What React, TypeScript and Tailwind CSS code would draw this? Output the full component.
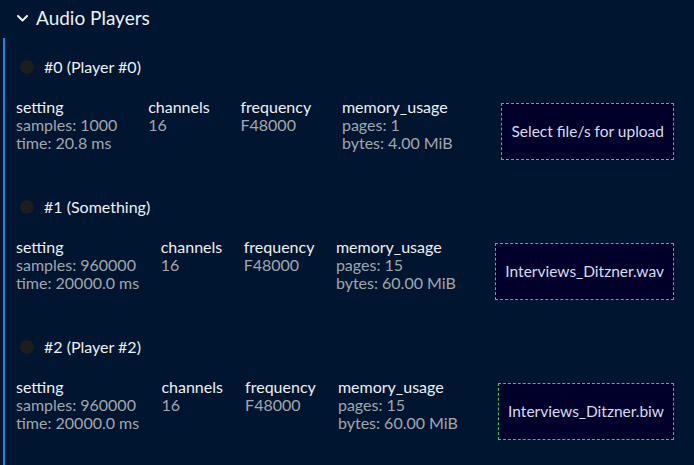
import React from 'react';

interface Player {
  id: number;
  name: string;
  samples: number;
  time: string;
  pages: number;
  bytes: string;
  file?: string;
}

const players: Player[] = [
  { id: 0, name: 'Player #0', samples: 1000, time: '20.8', pages: 1, bytes: '4.00' },
  { id: 1, name: 'Something', samples: 960000, time: '20000.0', pages: 15, bytes: '60.00', file: 'Interviews_Ditzner.wav' },
  { id: 2, name: 'Player #2', samples: 960000, time: '20000.0', pages: 15, bytes: '60.00', file: 'Interviews_Ditzner.biw' },
];

function Stat({ label, lines }: { label: string; lines: string[] }) {
  return (
    <div className="flex flex-col leading-[18px]">
      <span className="text-[#eef0f4]">{label}</span>
      {lines.map((l) => (
        <span key={l} className="text-[#a3a6ad]">
          {l}
        </span>
      ))}
    </div>
  );
}

const boxEmpty =
  'ml-[18px] mt-[5px] h-[57px] px-[9px] flex items-center bg-[#00002a] border border-dashed border-[#8e9299] text-[15.5px] text-[#d9ddf0]';
const boxLoaded =
  'ml-[18px] mt-[5px] h-[57px] px-[9px] flex items-center bg-[#00002a] border border-dashed border-[#22d06c] text-[15.5px] text-[#d9ddf0]';

function PlayerCard({ player }: { player: Player }) {
  return (
    <div className="flex flex-col pb-[38px]">
      {/* Player header */}
      <div className="flex items-center h-[18px] pl-[20px]">
        <div className="w-[14px] h-[14px] rounded-full bg-[#1d1d1e]" />
        <span className="ml-[10px] text-[#eef0f4]">
          #{player.id} ({player.name})
        </span>
      </div>

      {/* Stats */}
      <div className="flex items-start justify-between mt-[22px] pl-[16px] pr-[20px]">
        <Stat label="setting" lines={[`samples: ${player.samples}`, `time: ${player.time} ms`]} />
        <Stat label="channels" lines={['16']} />
        <Stat label="frequency" lines={['F48000']} />
        <Stat label="memory_usage" lines={[`pages: ${player.pages}`, `bytes: ${player.bytes} MiB`]} />
        <div className={player.file ? boxLoaded : boxEmpty}>{player.file ?? 'Select file/s for upload'}</div>
      </div>
    </div>
  );
}

export default function App() {
  return (
    <div
      className="w-[694px] h-[465px] overflow-hidden bg-[#001530] text-[16px]"
      style={{ fontFamily: 'Lato, "Open Sans", sans-serif' }}
    >
      {/* Section header */}
      <div className="flex items-center h-[38px] pl-[17px] pb-[2px]">
        <svg width="11" height="7" viewBox="0 0 11 7" fill="none" className="mt-[1px]">
          <path d="M1 1l4.5 4.5L10 1" stroke="#eef0f4" strokeWidth="2" strokeLinecap="round" strokeLinejoin="round" />
        </svg>
        <span className="ml-[8px] text-[19px] leading-[24px] text-[#eef0f4]">Audio Players</span>
      </div>

      {/* Players list */}
      <div className="flex ml-[3px]">
        <div className="w-[2px] bg-[#0a8ee8] shrink-0" />
        <div className="flex-1 flex flex-col pt-[20px] -ml-[5px]">
          {players.map((p) => (
            <PlayerCard key={p.id} player={p} />
          ))}
        </div>
      </div>
    </div>
  );
}
